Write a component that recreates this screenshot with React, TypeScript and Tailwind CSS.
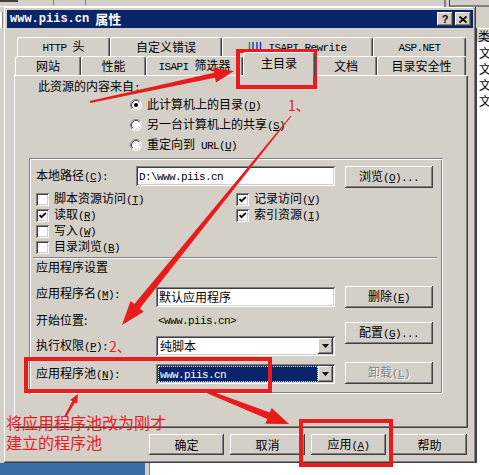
import React from "react";

const MONO = "font-['Liberation_Mono',monospace] text-[11px] tracking-[-0.6px] whitespace-pre";
const RAISED =
  "shadow-[inset_-1px_-1px_#404040,inset_1px_1px_#ffffff,inset_-2px_-2px_#808080,inset_2px_2px_#d4d0c8]";
const SUNKEN =
  "shadow-[inset_1px_1px_#808080,inset_-1px_-1px_#ffffff,inset_2px_2px_#404040,inset_-2px_-2px_#d4d0c8]";
const ETCH =
  "shadow-[inset_1px_1px_#808080,inset_-1px_-1px_#ffffff,inset_2px_2px_#ffffff,inset_-2px_-2px_#808080]";

function T({ s }: { s: string }) {
  const out: React.ReactNode[] = [];
  s.split(/([\x20-\x7e]+)/).forEach((p, i) => {
    if (!p) return;
    if (/^[\x20-\x7e]+$/.test(p)) {
      const segs = p.split(/&(.)/);
      out.push(
        <span key={i} className={MONO}>
          {segs.map((g, j) => (j % 2 ? <u key={j}>{g}</u> : g))}
        </span>
      );
    } else out.push(<span key={i}>{p}</span>);
  });
  return <span className="whitespace-pre">{out}</span>;
}

function Btn({
  children,
  className = "",
  disabled,
}: {
  children: React.ReactNode;
  className?: string;
  disabled?: boolean;
}) {
  return (
    <div
      className={`flex items-center justify-center bg-[#d4d0c8] ${RAISED} ${
        disabled ? "text-[#808080] [text-shadow:1px_1px_#ffffff]" : "text-black"
      } ${className}`}
    >
      {children}
    </div>
  );
}

function Chk({ label, checked }: { label: string; checked?: boolean }) {
  return (
    <div className="flex items-center h-[16px] gap-[5px]">
      <div className={`w-[13px] h-[13px] bg-white ${SUNKEN} flex items-center justify-center`}>
        {checked && (
          <svg width="13" height="13" viewBox="0 0 13 13">
            <polyline points="3.5,6 5.5,8.2 9.8,3.8" fill="none" stroke="#000" strokeWidth="1.8" />
          </svg>
        )}
      </div>
      <span className="leading-[14px]">
        <T s={label} />
      </span>
    </div>
  );
}

function Radio({ label, on }: { label: string; on?: boolean }) {
  return (
    <div className="flex items-center h-[20px] gap-[5px]">
      <svg width="12" height="12" viewBox="0 0 12 12">
        <circle cx="6" cy="6" r="5.5" fill="#fff" />
        <path d="M2.11 9.89 A5.5 5.5 0 0 1 9.89 2.11" stroke="#808080" fill="none" />
        <path d="M9.89 2.11 A5.5 5.5 0 0 1 2.11 9.89" stroke="#ffffff" fill="none" />
        <path d="M2.82 9.18 A4.5 4.5 0 0 1 9.18 2.82" stroke="#404040" fill="none" />
        <path d="M9.18 2.82 A4.5 4.5 0 0 1 2.82 9.18" stroke="#d4d0c8" fill="none" />
        {on && <circle cx="6" cy="6" r="2" fill="#000" />}
      </svg>
      <span className="leading-[14px]">
        <T s={label} />
      </span>
    </div>
  );
}

function Combo({ children, sel }: { children: React.ReactNode; sel?: boolean }) {
  return (
    <div className={`w-[179px] h-[20px] bg-white ${SUNKEN} flex items-center p-[2px]`}>
      <div className="flex-1 h-full flex items-center">
        {sel ? (
          <div className="w-full h-full bg-[#0a246a] text-white flex items-center pl-[2px] outline outline-1 outline-dotted outline-[#e8e880] -outline-offset-1">
            {children}
          </div>
        ) : (
          <div className="pl-[2px]">{children}</div>
        )}
      </div>
      <div className={`w-[15px] h-[16px] bg-[#d4d0c8] ${RAISED} flex items-center justify-center`}>
        <svg width="7" height="4" viewBox="0 0 7 4">
          <polygon points="0,0 7,0 3.5,4" fill="#000" />
        </svg>
      </div>
    </div>
  );
}

const TAB =
  "flex items-center justify-center bg-[#d4d0c8] rounded-t-[3px] border-t border-l border-r border-white border-r-[#404040] shadow-[inset_-1px_0_#808080]";

function arrow(
  x1: number,
  y1: number,
  x2: number,
  y2: number,
  w1: number,
  w2: number,
  hl: number,
  hw: number
) {
  const dx = x2 - x1,
    dy = y2 - y1,
    L = Math.hypot(dx, dy);
  const ux = dx / L,
    uy = dy / L;
  const nx = -uy,
    ny = ux;
  const bx = x2 - ux * hl,
    by = y2 - uy * hl;
  const pts = [
    [x1 + (nx * w1) / 2, y1 + (ny * w1) / 2],
    [bx + (nx * w2) / 2, by + (ny * w2) / 2],
    [bx + (nx * hw) / 2, by + (ny * hw) / 2],
    [x2, y2],
    [bx - (nx * hw) / 2, by - (ny * hw) / 2],
    [bx - (nx * w2) / 2, by - (ny * w2) / 2],
    [x1 - (nx * w1) / 2, y1 - (ny * w1) / 2],
  ];
  return pts.map((p) => p.map((v) => v.toFixed(1)).join(",")).join(" ");
}

export default function App() {
  const RED = "#e81c1c";
  return (
    <div className="relative w-[489px] h-[475px] overflow-hidden bg-[#d4d0c8] font-['Noto_Sans_CJK_SC',sans-serif] text-[12px] text-black">
      {/* background: top window edge */}
      <div className="absolute left-0 top-0 w-[446px] h-[7px] bg-[#d4d0c8] border-b border-b-white">
        <div className="absolute left-0 top-0 w-[18px] h-[2px] bg-[#404040]" />
        <div className="absolute left-[53px] top-0 w-[1px] h-[5px] bg-[#808080]" />
        <div className="absolute left-[85px] top-0 w-[1px] h-[5px] bg-[#808080]" />
        <div className="absolute left-[444px] top-0 w-[2px] h-[7px] bg-[#808080]" />
      </div>
      <div className="absolute left-[449px] top-0 w-[40px] h-[7px] border-l border-l-[#404040] border-b-2 border-b-[#808080]" />
      {/* background: left edge */}
      <div className="absolute left-0 top-[12px] w-[3px] h-[16px] bg-white border-r border-r-[#808080]" />
      {/* background: right list window */}
      <div className="absolute left-[476px] top-[28px] w-[13px] h-[435px] bg-white border-l border-l-[#404040] overflow-hidden">
        <div className="h-[14px] bg-[#d4d0c8] border-t border-t-white pl-[1px] leading-[13px]">类</div>
        <div className="flex flex-col pl-[2px] pt-[3px] leading-[16px]">
          <span>文</span>
          <span>文</span>
          <span>文</span>
          <span>文</span>
        </div>
      </div>
      {/* background: bottom */}
      <div className="absolute left-0 top-[463px] w-[489px] h-[12px] flex">
        <div className="w-[145px] h-full bg-[#3a6ea5]" />
        <div className="w-[5px] h-full bg-[#d4d0c8] border-r border-r-[#808080]" />
        <div className="flex-1 h-full bg-white" />
      </div>

      {/* dialog */}
      <div className={`absolute left-[4px] top-[7px] w-[472px] h-[456px] bg-[#d4d0c8] p-[3px] ${RAISED} flex flex-col`}>
        <div className="h-[18px] bg-[#0a246a] flex items-center pl-[3px] pr-[2px]">
          <span className="font-['Liberation_Mono',monospace] font-bold text-[12px] text-white leading-[14px]">
            www.piis.cn
          </span>
          <span className="ml-[6px] font-bold text-[13px] text-white leading-[14px]">属性</span>
          <div className="ml-auto flex gap-[2px]">
            <div className={`w-[16px] h-[14px] bg-[#d4d0c8] ${RAISED} flex items-center justify-center font-['Liberation_Sans',sans-serif] font-bold text-[11px] leading-[11px]`}>
              ?
            </div>
            <div className={`w-[16px] h-[14px] bg-[#d4d0c8] ${RAISED} flex items-center justify-center`}>
              <svg width="8" height="7" viewBox="0 0 8 7">
                <path d="M0.5 0.5 L7.5 6.5 M7.5 0.5 L0.5 6.5" stroke="#000" strokeWidth="1.6" />
              </svg>
            </div>
          </div>
        </div>

        {/* tabs row 1 */}
        <div className="relative flex mt-[9px] ml-[10px] h-[19px]">
          <div className={`${TAB} w-[93px] h-[19px]`}>
            <T s="HTTP 头" />
          </div>
          <div className={`${TAB} w-[112px] h-[19px]`}>
            <T s="自定义错误" />
          </div>
          <div className={`${TAB} w-[151px] h-[19px] gap-[6px]`}>
            <svg width="14" height="13" viewBox="0 0 14 13">
              <path d="M1.5 1 V9 Q1.5 11 3.5 11" stroke="#20a020" strokeWidth="1.5" fill="none" />
              <path d="M5 1 V10 Q5 12 7 12 Q9 12 9 10 V1 M12.5 1 V10 Q12.5 12 10.5 12" stroke="#2030c0" strokeWidth="1.4" fill="none" />
            </svg>
            <T s="ISAPI_Rewrite" />
          </div>
          <div className={`${TAB} w-[93px] h-[19px]`}>
            <T s="ASP.NET" />
          </div>
        </div>
        {/* tabs row 2 */}
        <div className="relative flex items-end mt-[-4px] ml-[8px] h-[23px]">
          <div className={`${TAB} w-[66px] h-[19px]`}>网站</div>
          <div className={`${TAB} w-[65px] h-[19px]`}>性能</div>
          <div className={`${TAB} w-[97px] h-[19px]`}>
            <T s="ISAPI 筛选器" />
          </div>
          <div className={`${TAB} relative z-10 w-[72px] h-[24px] mb-[-1px] pb-[3px]`}>主目录</div>
          <div className={`${TAB} w-[62px] h-[19px]`}>文档</div>
          <div className={`${TAB} w-[89px] h-[19px]`}>目录安全性</div>
        </div>

        {/* panel */}
        <div className="relative ml-[7px] w-[454px] h-[353px] bg-[#d4d0c8] shadow-[inset_1px_1px_#ffffff,inset_-1px_-1px_#404040,inset_-2px_-2px_#808080] flex flex-col">
          <div className="mt-[4px] h-[14px] leading-[14px] pl-[24px]">
            <T s="此资源的内容来自:" />
          </div>
          <div className="mt-[2px] pl-[116px] flex flex-col">
            <Radio on label="此计算机上的目录(&D)" />
            <Radio label="另一台计算机上的共享(&S)" />
            <Radio label="重定向到 URL(&U)" />
          </div>

          {/* group box */}
          <div className={`ml-[15px] mt-[3px] w-[414px] h-[236px] ${ETCH} flex flex-col`}>
            <div className="flex items-start mt-[8px] pl-[7px] h-[22px]">
              <div className="w-[100px] h-[20px] flex items-center">
                <T s="本地路径(&C):" />
              </div>
              <div className={`w-[199px] h-[20px] bg-white ${SUNKEN} flex items-center pl-[3px]`}>
                <T s={"D:\\www.piis.cn"} />
              </div>
              <Btn className="ml-[10px] w-[88px] h-[22px]">
                <T s="浏览(&O)..." />
              </Btn>
            </div>
            <div className="flex mt-[3px] pl-[7px]">
              <div className="w-[200px] flex flex-col">
                <Chk label="脚本资源访问(&T)" />
                <Chk checked label="读取(&R)" />
                <Chk label="写入(&W)" />
                <Chk label="目录浏览(&B)" />
              </div>
              <div className="flex flex-col">
                <Chk checked label="记录访问(&V)" />
                <Chk checked label="索引资源(&I)" />
              </div>
            </div>
            <div className="mt-[2px] ml-[4px] mr-[6px] h-[2px] border-t border-t-[#808080] border-b border-b-white" />
            <div className="mt-[2px] h-[12px] leading-[12px] pl-[7px]">应用程序设置</div>

            <div className="flex mt-[13px]">
              <div className="w-[306px] pl-[7px] flex flex-col">
                <div className="flex items-start h-[22px]">
                  <div className="w-[120px] mt-[1px] leading-[12px]">
                    <T s="应用程序名(&M):" />
                  </div>
                  <div className={`mt-[1px] w-[179px] h-[20px] bg-white ${SUNKEN} flex items-center pl-[3px]`}>
                    默认应用程序
                  </div>
                </div>
                <div className="flex items-center h-[24px]">
                  <div className="w-[122px]">开始位置:</div>
                  <T s="<www.piis.cn>" />
                </div>
                <div className="flex items-center h-[20px] mt-[4px]">
                  <div className="w-[120px]">
                    <T s="执行权限(&P):" />
                  </div>
                  <Combo>纯脚本</Combo>
                </div>
                <div className="flex items-center h-[20px] mt-[8px]">
                  <div className="w-[120px]">
                    <T s="应用程序池(&N):" />
                  </div>
                  <Combo sel>
                    <T s="www.piis.cn" />
                  </Combo>
                </div>
              </div>
              <div className="ml-[10px] flex flex-col">
                <Btn className="w-[88px] h-[22px]">
                  <T s="删除(&E)" />
                </Btn>
                <Btn className="w-[88px] h-[22px] mt-[14px]">
                  <T s="配置(&G)..." />
                </Btn>
                <Btn disabled className="w-[88px] h-[22px] mt-[18px]">
                  <T s="卸载(&L)" />
                </Btn>
              </div>
            </div>
          </div>
        </div>

        {/* bottom buttons */}
        <div className="flex justify-end gap-[6px] mt-[6px] pr-[6px]">
          <Btn className="w-[75px] h-[21px]">确定</Btn>
          <Btn className="w-[75px] h-[21px]">取消</Btn>
          <Btn className="w-[75px] h-[21px]">
            <T s="应用(&A)" />
          </Btn>
          <Btn className="w-[75px] h-[21px]">帮助</Btn>
        </div>
      </div>

      {/* annotations */}
      <div className="absolute inset-0 pointer-events-none">
        <svg width="489" height="475" className="absolute left-0 top-0">
          <rect x="238" y="51" width="77" height="36" fill="none" stroke={RED} strokeWidth="4" />
          <rect x="26" y="359" width="244" height="32" fill="none" stroke={RED} strokeWidth="4" />
          <rect x="301" y="421" width="90" height="44" fill="none" stroke={RED} strokeWidth="4" />
          <polygon points={arrow(90, 102, 234, 71, 2, 5, 20, 15)} fill={RED} />
          <polygon points={arrow(291, 116, 122, 325, 1, 7, 24, 17)} fill={RED} />
          <polygon points={arrow(65, 417, 78, 394, 2, 3, 9, 8)} fill={RED} />
          <polygon points={arrow(206, 391, 289, 424, 3, 7, 22, 17)} fill={RED} />
        </svg>
        <div className="absolute left-[288px] top-[97px] text-[14px] leading-[16px] text-[#e81c1c]">1、</div>
        <div className="absolute left-[109px] top-[338px] text-[14px] leading-[16px] text-[#e81c1c]">2、</div>
        <div className="absolute left-[6px] top-[412px] text-[16px] leading-[20px] text-[#e81c1c]">
          <div>将应用程序池改为刚才</div>
          <div>建立的程序池</div>
        </div>
      </div>
    </div>
  );
}
